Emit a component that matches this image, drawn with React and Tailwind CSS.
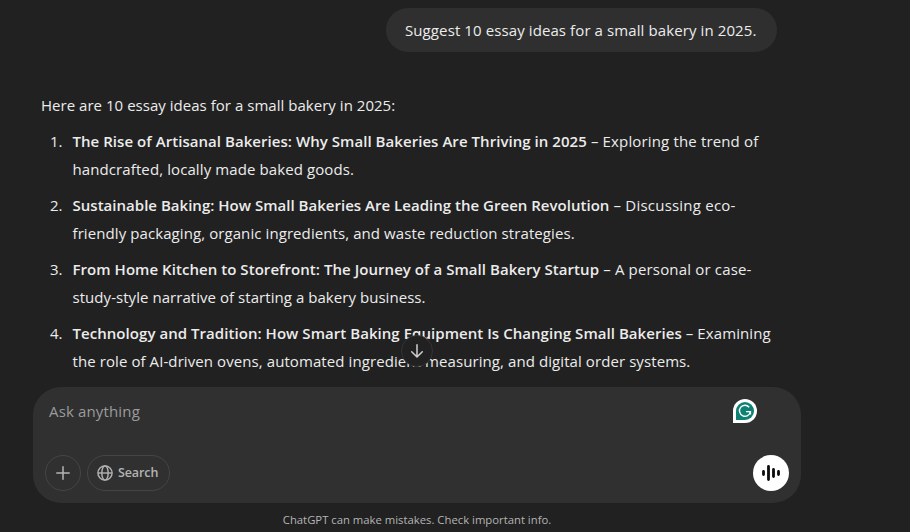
import React from 'react';

// Each idea keeps its own line breaks
const ideas = [
  {
    title: 'The Rise of Artisanal Bakeries: Why Small Bakeries Are Thriving in 2025',
    titleClass: 'tracking-[0.05px]',
    lead: ' – Exploring the trend of',
    leadClass: 'tracking-[0.15px]',
    rest: 'handcrafted, locally made baked goods.',
    restClass: 'tracking-[0.1px]',
  },
  {
    title: 'Sustainable Baking: How Small Bakeries Are Leading the Green Revolution',
    titleClass: 'tracking-[0.02px]',
    lead: ' – Discussing eco-',
    leadClass: 'tracking-[0.22px]',
    rest: 'friendly packaging, organic ingredients, and waste reduction strategies.',
    restClass: 'tracking-[0.085px]',
  },
  {
    title: 'From Home Kitchen to Storefront: The Journey of a Small Bakery Startup',
    titleClass: 'tracking-[0.05px]',
    lead: ' – A personal or case-',
    leadClass: 'tracking-[0.17px]',
    rest: 'study-style narrative of starting a bakery business.',
    restClass: 'tracking-[0.05px]',
  },
  {
    title: 'Technology and Tradition: How Smart Baking Equipment Is Changing Small Bakeries',
    titleClass: 'tracking-[0.05px]',
    lead: ' – Examining',
    leadClass: 'tracking-[0.1px]',
    rest: 'the role of AI-driven ovens, automated ingredient measuring, and digital order systems.',
    restClass: 'tracking-[0.085px]',
  },
];

function ArrowDownIcon() {
  return (
    <svg width="16" height="16" viewBox="0 0 16 16" fill="none" stroke="#cfcfcf" strokeWidth="1.5" strokeLinecap="round" strokeLinejoin="round">
      <path d="M8 1.8v12M2.7 8.7 8 14l5.3-5.3" />
    </svg>
  );
}

function PlusIcon() {
  return (
    <svg width="14" height="14" viewBox="0 0 14 14" stroke="#b4b4b4" strokeWidth="1.5" strokeLinecap="round">
      <path d="M7 .8v12.4M.8 7h12.4" />
    </svg>
  );
}

function GlobeIcon() {
  return (
    <svg width="16" height="16" viewBox="0 0 16 16" fill="none" stroke="#b4b4b4" strokeWidth="1.4">
      <circle cx="8" cy="8" r="7.1" />
      <ellipse cx="8" cy="8" rx="3.2" ry="7.1" />
      <path d="M1 8h14" />
    </svg>
  );
}

function GrammarlyIcon() {
  return (
    <svg width="24" height="24" viewBox="0 0 24 24" fill="none">
      <path d="M0 24V12a12 12 0 1 1 12 12Z" fill="#fff" />
      <path d="M3 21v-9a9 9 0 1 1 9 9Z" fill="#0e8074" />
      <path d="M16.2 8.2A5.5 5.5 0 1 0 17.4 12.6H13M17.4 12v3.6" stroke="#fff" strokeWidth="1.4" />
    </svg>
  );
}

function VoiceIcon() {
  return (
    <svg width="20" height="18" viewBox="0 0 20 18" stroke="#0d0d0d" strokeWidth="2.8" strokeLinecap="round">
      <path d="M2.5 7.5v3M7.5 2.4v13.2M12.5 5.4v7.2M17.5 7.5v3" />
    </svg>
  );
}

export default function App() {
  return (
    <div className="flex h-[532px] w-[910px] flex-col overflow-hidden bg-[#212121] pl-[33px] pt-2 font-['Open_Sans','Noto_Sans',sans-serif] text-[15px] text-[#ececec]">
      <div className="flex w-[744px] justify-end">
        <div className="flex h-11 w-[391px] items-center rounded-[22px] bg-[#2f2f2f] pl-[19px] tracking-[0.1px] whitespace-nowrap">
          Suggest 10 essay ideas for a small bakery in 2025.
        </div>
      </div>

      <div className="mt-[39px] flex flex-col gap-2 pl-2 leading-7 whitespace-nowrap">
        <p className="tracking-[0.03px]">Here are 10 essay ideas for a small bakery in 2025:</p>
        <ol className="flex flex-col gap-2">
          {ideas.map((idea, i) => (
            <li key={idea.title} className="flex">
              <span className="w-[31.5px] pl-[9px]">{i + 1}.</span>
              <div className="flex flex-col">
                <p className="whitespace-pre">
                  <strong className={`font-semibold ${idea.titleClass}`}>{idea.title}</strong>
                  <span className={idea.leadClass}>{idea.lead}</span>
                </p>
                <p className={idea.restClass}>{idea.rest}</p>
              </div>
            </li>
          ))}
        </ol>
      </div>

      <div className="relative mt-3 h-[116px] w-[768px] shrink-0 rounded-[28px] bg-[#303030]">
        <button className="absolute -top-[52px] left-[368px] flex h-8 w-8 items-center justify-center rounded-full border border-[#343434] bg-[#212121]">
          <ArrowDownIcon />
        </button>
        <div className="flex justify-between pl-4 pr-11 pt-3">
          <span className="leading-6 tracking-[0.15px] text-[#9b9b9b]">Ask anything</span>
          <GrammarlyIcon />
        </div>
        <div className="mt-8 flex items-center gap-1.5 px-3">
          <button className="flex h-9 w-9 items-center justify-center rounded-full border border-[#454545]">
            <PlusIcon />
          </button>
          <button className="flex h-9 w-[83px] items-center gap-[5px] rounded-full border border-[#454545] pl-[9px] text-[12.5px] font-semibold tracking-[-0.1px] text-[#b4b4b4]">
            <GlobeIcon />
            Search
          </button>
          <button className="ml-auto flex h-9 w-9 items-center justify-center rounded-full bg-white">
            <VoiceIcon />
          </button>
        </div>
      </div>

      <p className="w-[768px] pt-[9px] text-center text-[11.3px] leading-4 text-[#b4b4b4]">
        ChatGPT can make mistakes. Check important info.
      </p>
    </div>
  );
}
